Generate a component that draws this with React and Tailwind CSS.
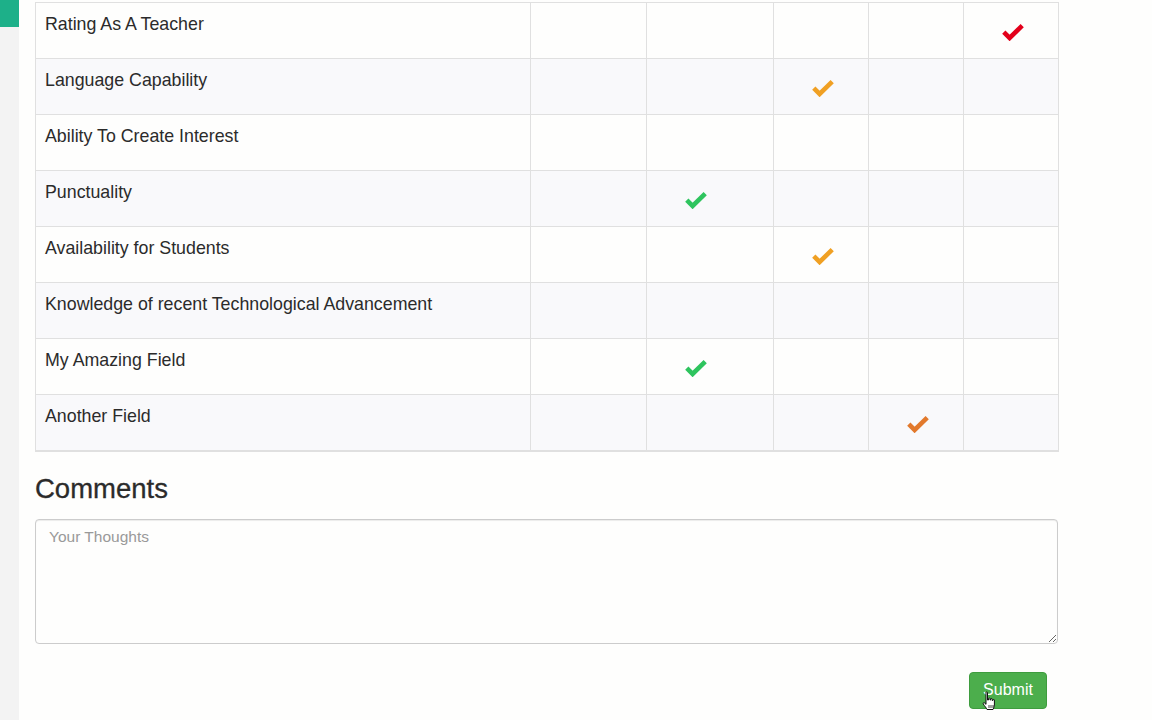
import React from "react";

const rows = [
  { label: "Rating As A Teacher", col: 5, color: "#e3001b" },
  { label: "Language Capability", col: 3, color: "#f0a023" },
  { label: "Ability To Create Interest", col: null },
  { label: "Punctuality", col: 2, color: "#2ec45e" },
  { label: "Availability for Students", col: 3, color: "#f0a023" },
  { label: "Knowledge of recent Technological Advancement", col: null },
  { label: "My Amazing Field", col: 2, color: "#2ec45e" },
  { label: "Another Field", col: 4, color: "#e2792c" },
];

function Check({ color }) {
  return (
    <svg width="22" height="18" viewBox="0 0 22 18" className="block">
      <path d="M1.8 9.2 L7.6 15 L20.2 2.6" fill="none" stroke={color} strokeWidth="4.6" strokeLinejoin="miter" strokeLinecap="butt" />
    </svg>
  );
}

export default function App() {
  return (
    <div className="flex min-h-[720px] w-[1152px] bg-[#fefefd] text-[#333]" style={{ fontFamily: '"Liberation Sans", Arial, sans-serif' }}>
      <div className="relative w-[19px] shrink-0 bg-[#f3f3f3]">
        <div className="h-[27px] w-[19px] bg-[#1db089]" />
      </div>
      <div className="w-[1023px] ml-[16px] pt-[2px]">
        <table className="w-[1023px] border-collapse table-fixed border-x border-t border-b-2 border-[#e0e0e0]">
          <colgroup>
            <col className="w-[495px]" />
            <col className="w-[116px]" />
            <col className="w-[127px]" />
            <col className="w-[95px]" />
            <col className="w-[95px]" />
            <col className="w-[95px]" />
          </colgroup>
          <tbody>
            {rows.map((r, i) => (
              <tr key={i} className={i % 2 === 1 ? "bg-[#f9f9fb]" : "bg-[#fefefd]"}>
                <td className="h-[56px] border border-[#e0e0e0] align-top pl-[9px] pr-[8px] pt-[9px] text-[17.8px] leading-[24px] text-[#2b2b2b]">
                  {r.label}
                </td>
                {[1, 2, 3, 4, 5].map((c) => (
                  <td key={c} className="h-[56px] border border-[#e0e0e0] align-top pt-[20px] pl-[38px]">
                    {r.col === c ? <Check color={r.color} /> : null}
                  </td>
                ))}
              </tr>
            ))}
          </tbody>
        </table>
        <h2 className="mt-[21px] text-[27.5px] leading-[32px] font-normal text-[#2b2b2b] [-webkit-text-stroke:0.3px_#2b2b2b]">Comments</h2>
        <textarea
          placeholder="Your Thoughts"
          className="mt-[14px] block h-[125px] w-[1023px] rounded-[4px] border border-[#cccccc] bg-[#fefefd] px-[13px] py-[7px] text-[15.5px] leading-[20px] text-[#555] placeholder:text-[#999] shadow-[inset_0_1px_1px_rgba(0,0,0,0.075)] outline-none"
          style={{ fontFamily: '"Liberation Sans", Arial, sans-serif' }}
        />
        <div className="flex justify-end mt-[28px] pr-[11px]">
          <div className="relative">
            <button className="h-[37px] w-[78px] rounded-[4px] border border-[#3e9c3e] bg-[#4cae4c] text-[16px] text-white">
              Submit
            </button>
            <svg className="absolute left-[13px] top-[19px]" width="16" height="20" viewBox="0 0 16 20">
              <path
                d="M4 1.5 C4 0.7 5.5 0.7 5.5 1.5 L5.5 9 L6.5 9 L6.5 7.5 C6.5 6.8 8 6.8 8 7.5 L8 9 L8.7 9 L8.7 8 C8.7 7.3 10.2 7.3 10.2 8 L10.2 9.5 L10.9 9.5 L10.9 9 C10.9 8.3 12.4 8.3 12.4 9 L12.4 14 C12.4 16 11.5 17 11 18.5 L5 18.5 C4.5 17 2.5 15 1.3 13 C0.8 12 1.8 11.2 2.6 12 L4 13.3 Z"
                fill="#fff"
                stroke="#111"
                strokeWidth="1"
                strokeLinejoin="round"
              />
              <path d="M7 14 L7 17 M9 14 L9 17 M11 14 L11 17" stroke="#111" strokeWidth="0.8" />
            </svg>
          </div>
        </div>
      </div>
    </div>
  );
}
